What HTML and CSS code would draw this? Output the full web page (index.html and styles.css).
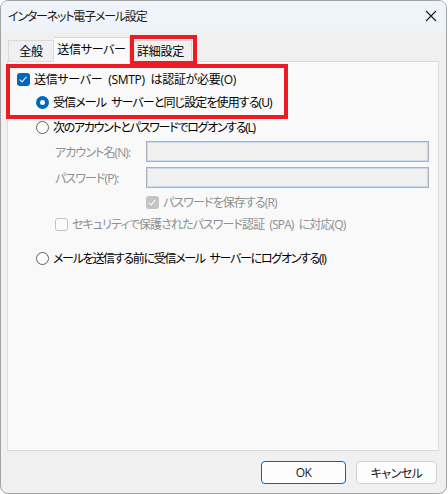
FILE: index.html
```html
<!DOCTYPE html>
<html lang="ja">
<head>
    <meta charset="UTF-8">
    <title>インターネット電子メール設定</title>
    <link rel="stylesheet" href="styles.css">
</head>
<body>
    <div class="window">
        <div class="titlebar">
            <span class="title">インターネット電子メール設定</span>
            <svg class="close" width="12" height="12" viewBox="0 0 12 12">
                <path d="M1 1 L11 11 M11 1 L1 11" stroke="#1a1a1a" stroke-width="1.1" fill="none"/>
            </svg>
        </div>

        <div class="tabs">
            <div class="tab">全般</div>
            <div class="tab active">送信サーバー</div>
            <div class="tab">詳細設定</div>
        </div>

        <div class="panel">
            <div class="row row-smtp">
                <span class="check checked"></span>
                <span class="wide">送信サーバー (SMTP) は認証が必要(O)</span>
            </div>
            <div class="row row-same indent1">
                <span class="radio selected"></span>
                <span>受信メール サーバーと同じ設定を使用する(U)</span>
            </div>
            <div class="row row-logon indent1">
                <span class="radio"></span>
                <span class="tight">次のアカウントとパスワードでログオンする(L)</span>
            </div>
            <div class="row row-account indent2 disabled">
                <span class="field-label">アカウント名(N):</span>
                <span class="field"></span>
            </div>
            <div class="row row-password indent2 disabled">
                <span class="field-label">パスワード(P):</span>
                <span class="field"></span>
            </div>
            <div class="row row-save indent3 disabled">
                <span class="check checked-off"></span>
                <span>パスワードを保存する(R)</span>
            </div>
            <div class="row row-spa indent2 disabled">
                <span class="check off"></span>
                <span>セキュリティで保護されたパスワード認証 (SPA) に対応(Q)</span>
            </div>
            <div class="row row-before indent1">
                <span class="radio"></span>
                <span class="tight">メールを送信する前に受信メール サーバーにログオンする(I)</span>
            </div>
        </div>

        <div class="buttons">
            <button class="btn default">OK</button>
            <button class="btn cancel">キャンセル</button>
        </div>

        <!-- 注釈の赤枠 -->
        <div class="mark mark-tab"></div>
        <div class="mark mark-auth"></div>
    </div>
</body>
</html>
```

FILE: styles.css
```css
* {
    margin: 0;
    padding: 0;
    box-sizing: border-box;
}

body {
    background: #ffffff;
    font-family: "Open Sans", "Noto Sans CJK JP", sans-serif;
    font-size: 12px;
    font-feature-settings: "palt";
    letter-spacing: -0.9px;
    word-spacing: 3px;
    color: #000;
}

.window {
    position: relative;
    width: 447px;
    height: 494px;
    background: #f0f0f0;
    border: 1px solid #a3a3a3;
    border-radius: 8px;
    overflow: hidden;
}

.titlebar {
    height: 30px;
    background: #eef4f9;
    display: flex;
    align-items: center;
    justify-content: space-between;
    padding: 0 8px 0 7px;
}

.title {
    font-size: 12px;
    color: #1a1a1a;
    letter-spacing: -1.2px;
}

.close {
    margin-right: 1px;
}

.tabs {
    display: flex;
    align-items: flex-end;
    height: 24px;
    margin-top: 6px;
    padding-left: 7px;
}

.tab {
    height: 21px;
    border: 1px solid #d9d9d9;
    border-bottom: none;
    background: #f0f0f0;
    display: flex;
    align-items: center;
    justify-content: center;
    white-space: nowrap;
    font-size: 12px;
    letter-spacing: -0.3px;
}

.tab:first-child {
    width: 46px;
}

.tab.active {
    height: 25px;
    width: 76px;
    margin-bottom: -1px;
    background: #f9f9f9;
    position: relative;
    z-index: 1;
    border-left: none;
    padding-bottom: 2px;
}

.tab:last-child {
    width: 62px;
    border-left: none;
}

.panel {
    margin-left: 6px;
    width: 432px;
    height: 390px;
    background: #f9f9f9;
    border: 1px solid #dcdcdc;
    padding: 6px 0 0 9px;
    display: flex;
    flex-direction: column;
}

.row {
    display: flex;
    align-items: center;
    height: 22px;
    gap: 4px;
    white-space: nowrap;
}

.wide {
    letter-spacing: -0.3px;
}

.tight {
    letter-spacing: -1.3px;
}

.indent1 { padding-left: 19px; }
.indent2 { padding-left: 38px; }
.indent3 { padding-left: 129px; }

.row-same { margin-top: 1px; }
.row-logon { margin-top: 3px; }
.row-account { margin-top: 3px; height: 21px; }
.row-password { margin-top: 5px; height: 21px; }
.row-save { margin-top: 3px; }
.row-spa { margin-top: 0; }
.row-before { margin-top: 12px; }

.disabled {
    color: #8f8f8f;
}

.field-label {
    width: 91px;
    flex-shrink: 0;
}

.row-account, .row-password {
    gap: 0;
}

.field {
    width: 283px;
    height: 21px;
    background: #f0f0f0;
    border: 1px solid #a9b0b9;
    box-shadow: inset 0 0 0 1px #c9dbee;
}

.check {
    width: 13px;
    height: 13px;
    border-radius: 3px;
    flex-shrink: 0;
    position: relative;
}

.check.checked {
    background: #0067c0;
}

.check.checked-off {
    background: #c4c4c4;
}

.check.checked::after,
.check.checked-off::after {
    content: "";
    position: absolute;
    left: 4px;
    top: 2px;
    width: 3px;
    height: 6px;
    border: solid #fff;
    border-width: 0 1.3px 1.3px 0;
    transform: rotate(40deg);
}

.check.off {
    background: #fbfbfb;
    border: 1px solid #c2c2c2;
}

.radio {
    width: 13px;
    height: 13px;
    border-radius: 50%;
    border: 1px solid #5f5f5f;
    background: #fdfdfd;
    flex-shrink: 0;
}

.radio.selected {
    border: 4px solid #0067c0;
    background: #fff;
}

.buttons {
    display: flex;
    justify-content: flex-end;
    gap: 10px;
    margin-top: 10px;
    padding-right: 9px;
}

.btn {
    height: 23px;
    font-family: inherit;
    font-size: 12px;
    font-feature-settings: "palt";
    letter-spacing: -0.5px;
    background: #fdfdfd;
    border: 1px solid #d0d0d0;
    border-radius: 4px;
    color: #1a1a1a;
}

.btn.default {
    width: 85px;
    border-color: #0067c0;
}

.btn.cancel {
    width: 81px;
}

.mark {
    position: absolute;
    border: 4px solid #ed1c24;
    pointer-events: none;
}

.mark-tab {
    left: 129px;
    top: 34px;
    width: 67px;
    height: 30px;
}

.mark-auth {
    left: 5px;
    top: 63px;
    width: 282px;
    height: 55px;
}
```
